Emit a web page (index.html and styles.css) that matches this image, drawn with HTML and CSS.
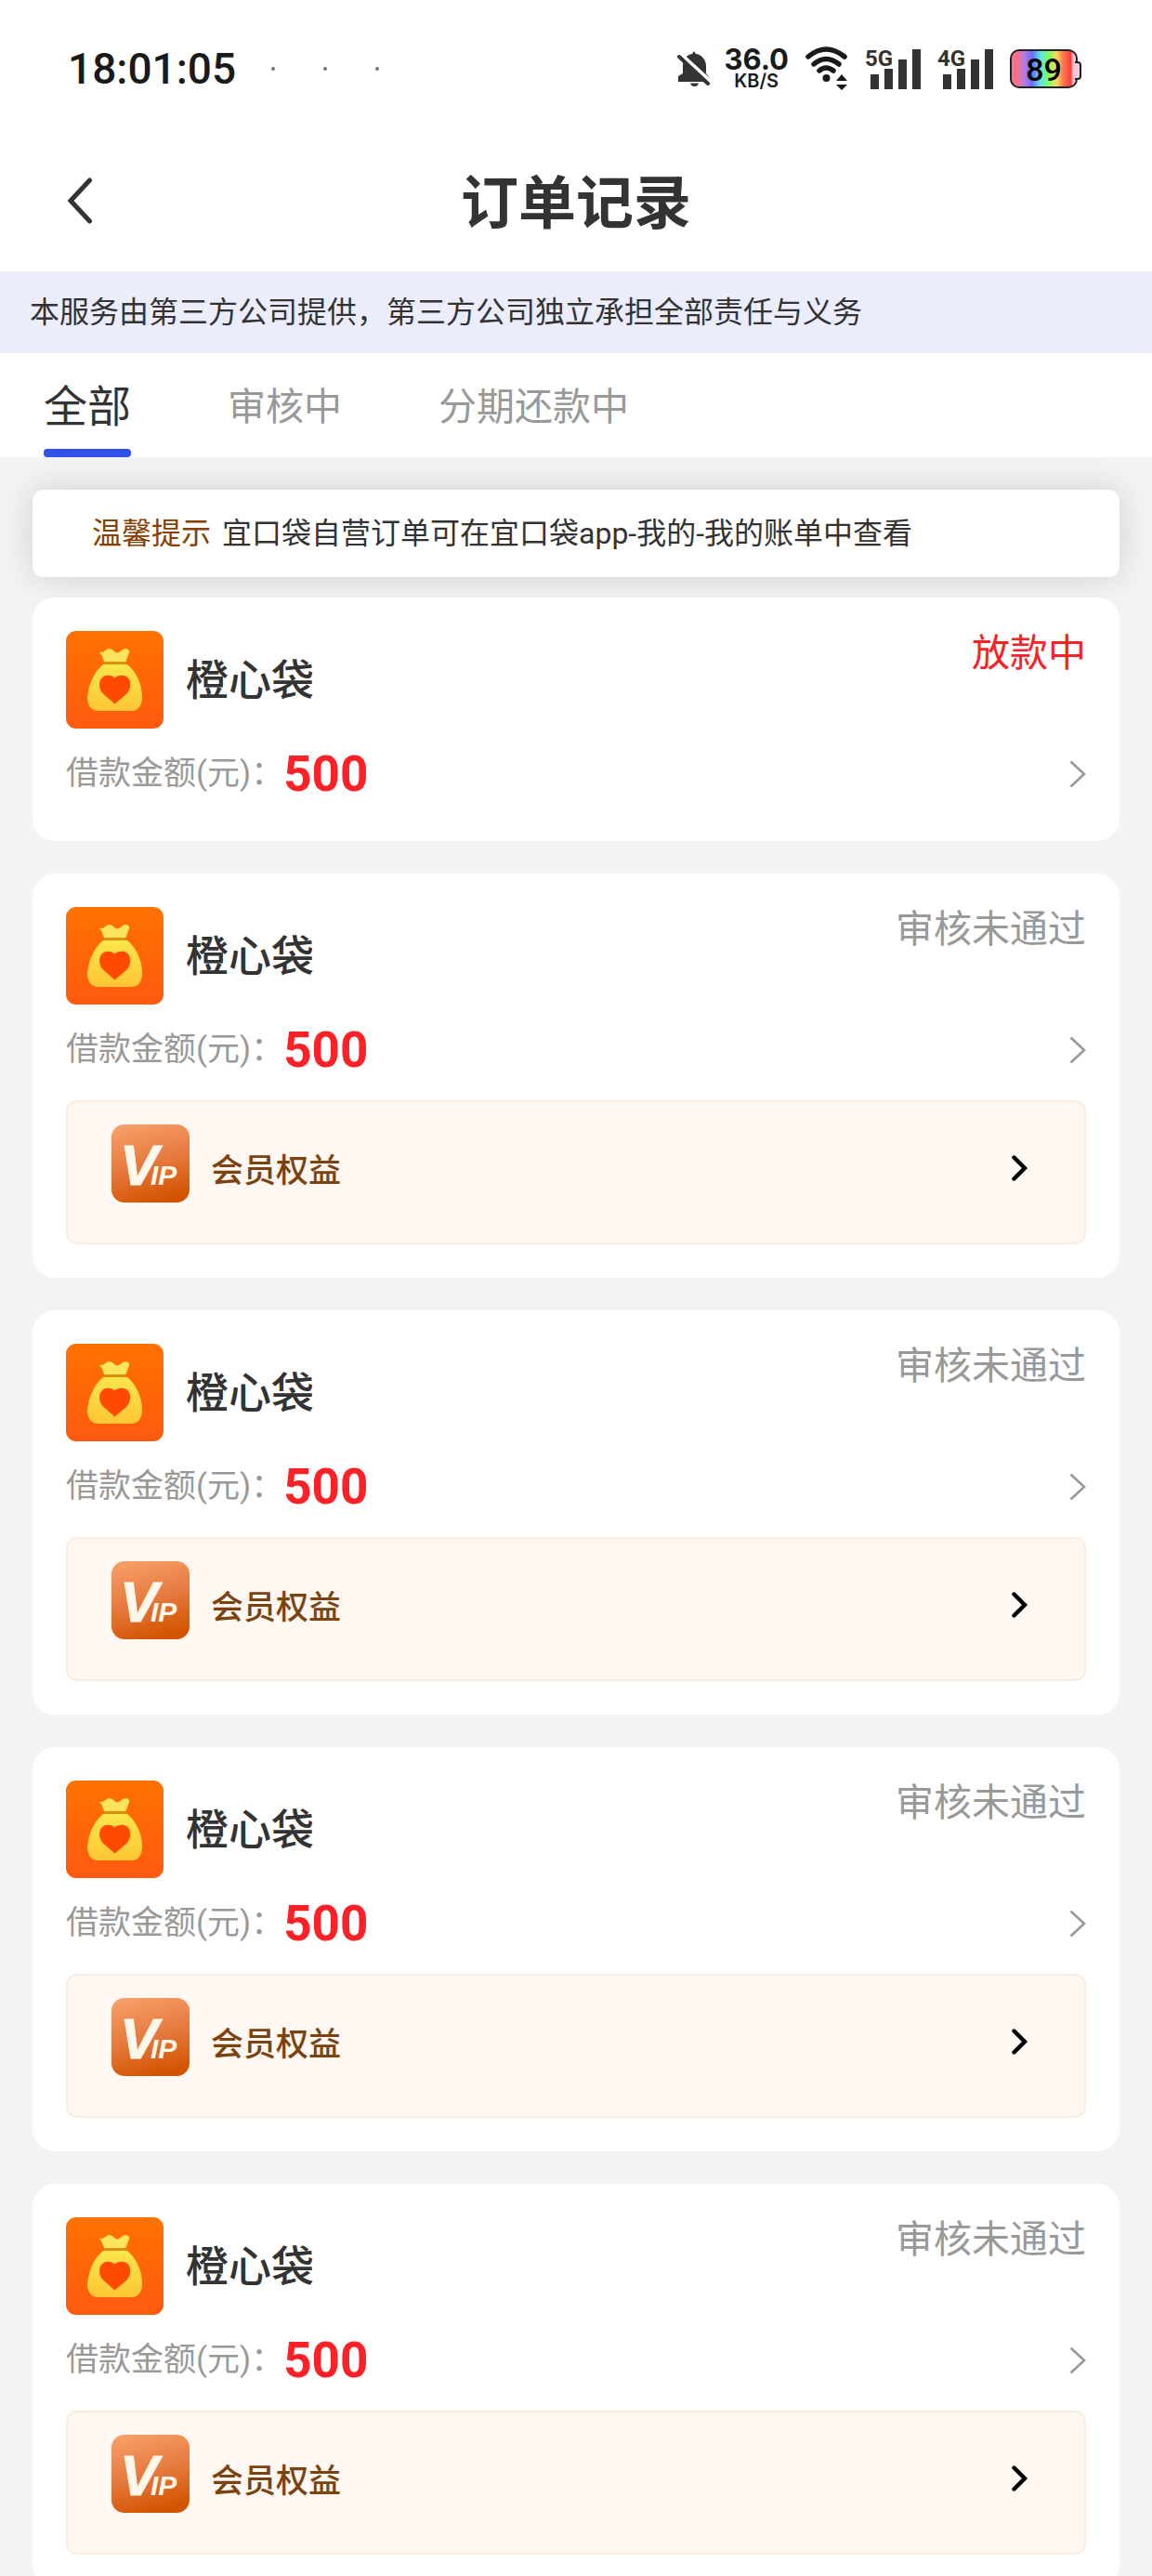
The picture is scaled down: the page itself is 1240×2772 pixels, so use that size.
FILE: index.html
```html
<!DOCTYPE html>
<html lang="zh-CN">
<head>
    <meta charset="UTF-8">
    <meta name="viewport" content="width=device-width, initial-scale=1">
    <title>订单记录</title>
    <link rel="stylesheet" href="styles.css">
</head>
<body>
    <!-- shared icons -->
    <svg class="sprite" aria-hidden="true">
        <defs>
            <linearGradient id="bagBg" x1="0" y1="0" x2="0" y2="1">
                <stop offset="0" stop-color="#ff7200"/>
                <stop offset="1" stop-color="#ff5a10"/>
            </linearGradient>
            <linearGradient id="bagGold" x1="0" y1="0" x2="0" y2="1">
                <stop offset="0" stop-color="#fbe64c"/>
                <stop offset="1" stop-color="#ffc634"/>
            </linearGradient>
        </defs>
        <symbol id="icon-bag" viewBox="0 0 105 105">
            <rect width="105" height="105" rx="11" fill="url(#bagBg)"/>
            <path d="M36 23 Q41 23 43 20.500 Q47 17.500 51 21 Q54 24.500 57 23 Q59 22 61 20 Q65 17.500 68 21 Q69 23 67 26 L64.500 33 H41 L39.500 29 Q38.500 25 36 23 Z" fill="#fde45c"/>
            <path d="M41 33 H64.500 V36 H41 Z" fill="#d9900a"/>
            <path d="M40 36 H66 C75 43 82 57 82 71 C82 80 78 86 70 86 H35 C27 86 23 80 23 72 C24 57 31 43 40 36 Z" fill="url(#bagGold)"/>
            <path d="M52.500 78.500 L40 67.500 C33 60 36 48 45 47.800 C49 47.800 51 49 52.500 50.500 C54 49 56 47.800 61 47.800 C70 48.500 72 60 65.500 67.500 Z" fill="#ff4a00"/>
        </symbol>
        <symbol id="icon-arrow" viewBox="0 0 18 30">
            <path d="M1.500 1.500 L16 15 L1.500 28.500" fill="none" stroke="#999" stroke-width="2.600"/>
        </symbol>
        <symbol id="icon-arrow-bold" viewBox="0 0 18 28">
            <path d="M2.500 2.500 L14 14 L2.500 25.500" fill="none" stroke="#000" stroke-width="4.400" stroke-linecap="round"/>
        </symbol>
    </svg>

    <div class="app">
        <div class="status-bar">
            <span class="time">18:01:05</span>
            <span class="dots"><i></i><i></i><i></i></span>
            <div class="status-icons">
                <svg width="36" height="40" viewBox="0 0 36 40">
                    <path d="M18 1 L20 4 C27 5 31 11 31 17 V25 L35 30 V34 H1 V28 L6 25 V17 C6 10 10 5 16 4 Z" fill="#333"/>
                    <path d="M14 35.500 H23 Q22 39 18.500 39 Q15 39 14 35.500 Z" fill="#333"/>
                    <path d="M4 4.500 L36 33.500" stroke="#fff" stroke-width="4"/>
                    <path d="M2 7 L33 36" stroke="#333" stroke-width="4" stroke-linecap="round"/>
                </svg>
                <div class="speed">
                    <span class="speed-value">36.0</span>
                    <span class="speed-unit">KB/S</span>
                </div>
                <svg class="wifi" width="46" height="48" viewBox="0 0 46 48">
                    <g fill="none" stroke="#1a1a1a" stroke-width="5.500" stroke-linecap="round">
                        <path d="M3 11 Q22 -5 42 11"/>
                        <path d="M9 19 Q22 8 36 19"/>
                        <path d="M15 26 Q22 20 30 26"/>
                    </g>
                    <circle cx="22.500" cy="34" r="4" fill="#1a1a1a"/>
                    <path d="M33 37 L39 30 L45 37 Z M33 41 H45 L39 47 Z" fill="#1a1a1a"/>
                </svg>
                <svg class="signal" width="60" height="44" viewBox="0 0 60 44">
                    <text x="0" y="19" class="net">5G</text>
                    <path d="M6 28 h9 v16 h-9z M21 22 h9 v22 h-9z M36 12 h9 v32 h-9z M51 1 h9 v43 h-9z" fill="#333"/>
                </svg>
                <svg class="signal" width="60" height="44" viewBox="0 0 60 44">
                    <text x="0" y="19" class="net">4G</text>
                    <path d="M6 28 h9 v16 h-9z M21 22 h9 v22 h-9z M36 12 h9 v32 h-9z M51 1 h9 v43 h-9z" fill="#333"/>
                </svg>
                <div class="battery"><span>89</span></div>
            </div>
        </div>

        <header class="nav">
            <button type="button" class="back" aria-label="返回">
                <svg width="28" height="50" viewBox="0 0 28 50">
                    <path d="M24.500 3 L4 25 L24.500 47" fill="none" stroke="#333" stroke-width="5" stroke-linecap="round"/>
                </svg>
            </button>
            <h1>订单记录</h1>
        </header>

        <div class="notice">本服务由第三方公司提供，第三方公司独立承担全部责任与义务</div>

        <nav class="tabs">
            <button type="button" class="tab active">全部</button>
            <button type="button" class="tab">审核中</button>
            <button type="button" class="tab">分期还款中</button>
        </nav>

        <main class="list">
            <div class="tip">
                <span class="tip-label">温馨提示</span>
                <span>宜口袋自营订单可在宜口袋app-我的-我的账单中查看</span>
            </div>

            <article class="card">
                <div class="card-head">
                    <svg class="logo"><use href="#icon-bag"/></svg>
                    <h2>橙心袋</h2>
                    <span class="state lending">放款中</span>
                </div>
                <a href="#" class="amount">
                    <span class="amount-label">借款金额(元)：</span>
                    <strong>500</strong>
                    <svg class="arrow"><use href="#icon-arrow"/></svg>
                </a>
            </article>

            <article class="card">
                <div class="card-head">
                    <svg class="logo"><use href="#icon-bag"/></svg>
                    <h2>橙心袋</h2>
                    <span class="state">审核未通过</span>
                </div>
                <a href="#" class="amount">
                    <span class="amount-label">借款金额(元)：</span>
                    <strong>500</strong>
                    <svg class="arrow"><use href="#icon-arrow"/></svg>
                </a>
                <a href="#" class="vip">
                    <svg class="vip-icon" viewBox="0 0 84 84">
                        <text x="9" y="65" class="vip-big">V</text>
                        <text x="42" y="65" class="vip-small">IP</text>
                    </svg>
                    <span>会员权益</span>
                    <svg class="vip-arrow"><use href="#icon-arrow-bold"/></svg>
                </a>
            </article>

            <article class="card">
                <div class="card-head">
                    <svg class="logo"><use href="#icon-bag"/></svg>
                    <h2>橙心袋</h2>
                    <span class="state">审核未通过</span>
                </div>
                <a href="#" class="amount">
                    <span class="amount-label">借款金额(元)：</span>
                    <strong>500</strong>
                    <svg class="arrow"><use href="#icon-arrow"/></svg>
                </a>
                <a href="#" class="vip">
                    <svg class="vip-icon" viewBox="0 0 84 84">
                        <text x="9" y="65" class="vip-big">V</text>
                        <text x="42" y="65" class="vip-small">IP</text>
                    </svg>
                    <span>会员权益</span>
                    <svg class="vip-arrow"><use href="#icon-arrow-bold"/></svg>
                </a>
            </article>

            <article class="card">
                <div class="card-head">
                    <svg class="logo"><use href="#icon-bag"/></svg>
                    <h2>橙心袋</h2>
                    <span class="state">审核未通过</span>
                </div>
                <a href="#" class="amount">
                    <span class="amount-label">借款金额(元)：</span>
                    <strong>500</strong>
                    <svg class="arrow"><use href="#icon-arrow"/></svg>
                </a>
                <a href="#" class="vip">
                    <svg class="vip-icon" viewBox="0 0 84 84">
                        <text x="9" y="65" class="vip-big">V</text>
                        <text x="42" y="65" class="vip-small">IP</text>
                    </svg>
                    <span>会员权益</span>
                    <svg class="vip-arrow"><use href="#icon-arrow-bold"/></svg>
                </a>
            </article>

            <article class="card">
                <div class="card-head">
                    <svg class="logo"><use href="#icon-bag"/></svg>
                    <h2>橙心袋</h2>
                    <span class="state">审核未通过</span>
                </div>
                <a href="#" class="amount">
                    <span class="amount-label">借款金额(元)：</span>
                    <strong>500</strong>
                    <svg class="arrow"><use href="#icon-arrow"/></svg>
                </a>
                <a href="#" class="vip">
                    <svg class="vip-icon" viewBox="0 0 84 84">
                        <text x="9" y="65" class="vip-big">V</text>
                        <text x="42" y="65" class="vip-small">IP</text>
                    </svg>
                    <span>会员权益</span>
                    <svg class="vip-arrow"><use href="#icon-arrow-bold"/></svg>
                </a>
            </article>
        </main>
    </div>
</body>
</html>
```
FILE: styles.css
```css
:root {
    --text-color: #333;
    --muted-color: #999;
    --background-color: #f3f3f3;
    --primary-color: #3350e8;
    --danger-color: #fb2126;
    --vip-color: #7a4310;
}

* {
    box-sizing: border-box;
}

body {
    margin: 0;
    font-family: Roboto, "Noto Sans CJK SC", sans-serif;
    color: var(--text-color);
    background: var(--background-color);
}

button {
    padding: 0;
    border: none;
    background: none;
    font-family: inherit;
    color: inherit;
    cursor: pointer;
}

a {
    color: inherit;
    text-decoration: none;
}

svg {
    display: block;
    flex-shrink: 0;
}

.sprite {
    position: absolute;
    width: 0;
    height: 0;
}

.app {
    display: flex;
    flex-direction: column;
    height: 100vh;
}

/* status bar */
.status-bar {
    display: flex;
    align-items: center;
    height: 148px;
    padding: 0 76px 0 73px;
    background: #fff;
    color: #1a1a1a;
}

.time {
    font-size: 46px;
    font-weight: 500;
    line-height: 54px;
}

.dots {
    display: flex;
    gap: 52px;
    margin-left: 38px;
}

.dots i {
    width: 4px;
    height: 4px;
    border-radius: 2px;
    background: #777;
}

.status-icons {
    display: flex;
    align-items: center;
    gap: 14px;
    margin-left: auto;
}

.speed {
    display: flex;
    flex-direction: column;
    align-items: center;
    font-family: Inter, sans-serif;
}

.speed-value {
    font-size: 31px;
    font-weight: 700;
    line-height: 26px;
}

.speed-unit {
    font-size: 20px;
    font-weight: 600;
    line-height: 20px;
}

.wifi,
.signal,
.battery {
    margin-left: 4px;
}

.signal {
    overflow: visible;
}

.net {
    font-size: 24px;
    font-weight: 700;
    fill: #333;
}

.battery {
    position: relative;
    width: 73px;
    height: 42px;
    margin-right: 4px;
    border: 2px solid #222;
    border-radius: 10px;
    background: linear-gradient(90deg, #ff6f8c 8%, #b07be0 20%, #6a6cff 32%, #62e6e0 45%, #7dff5c 58%, #ffd75c 70%, #ff7a50 80%, #ff3b3b 92%, #fbc8d8 96%);
    font-size: 34px;
    font-weight: 500;
    line-height: 40px;
    color: #000;
    text-align: center;
}

.battery::after {
    content: "";
    position: absolute;
    top: 11px;
    right: -6px;
    width: 5px;
    height: 16px;
    border: 2px solid #222;
    border-left: none;
    border-radius: 0 4px 4px 0;
    background: #fbc8d8;
}

/* title */
.nav {
    display: grid;
    grid-template-columns: 100px 1fr 100px;
    align-items: center;
    height: 144px;
    padding: 0 72px;
    background: #fff;
}

.back {
    padding-bottom: 8px;
}

.nav h1 {
    margin: 0;
    font-size: 62px;
    font-weight: 700;
    line-height: 80px;
    text-align: center;
}

.notice {
    padding: 20px 32px;
    background: #ebedfd;
    font-size: 32px;
    line-height: 48px;
}

.tabs {
    display: flex;
    gap: 104px;
    height: 112px;
    padding: 0 47px;
    background: #fff;
}

.tab {
    padding: 16px 0 13px;
    font-size: 41px;
    line-height: 60px;
    color: var(--muted-color);
}

.tab.active {
    position: relative;
    font-size: 47px;
    color: var(--text-color);
}

.tab.active::after {
    content: "";
    position: absolute;
    left: 0;
    right: 0;
    bottom: 0;
    height: 9px;
    border-radius: 4px;
    background: var(--primary-color);
}

/* orders */
.list {
    flex: 1;
    min-height: 0;
    padding: 35px;
    overflow-y: auto;
    scrollbar-width: none;
}

.tip {
    display: flex;
    gap: 12px;
    padding: 23px 64px;
    margin-bottom: 22px;
    border-radius: 12px;
    background: #fff;
    box-shadow: 0 0 36px rgba(0, 0, 0, 0.15);
    font-size: 32px;
    line-height: 48px;
}

.tip-label {
    color: #874000;
}

.card {
    position: relative;
    padding: 36px;
    margin-bottom: 35px;
    border-radius: 24px;
    background: #fff;
}

.card-head {
    display: flex;
    align-items: center;
}

.logo {
    width: 105px;
    height: 105px;
}

.card h2 {
    margin: 0 0 0 24px;
    font-size: 46px;
    font-weight: 500;
    line-height: 64px;
}

.state {
    align-self: flex-start;
    margin-left: auto;
    font-size: 41px;
    line-height: 48px;
    color: var(--muted-color);
}

.state.lending {
    color: var(--danger-color);
}

.amount {
    display: flex;
    align-items: center;
    height: 72px;
    margin-top: 13px;
}

.amount-label {
    font-size: 35px;
    line-height: 48px;
    color: var(--muted-color);
}

.amount strong {
    font-size: 53px;
    line-height: 72px;
    color: var(--danger-color);
}

.arrow {
    width: 18px;
    height: 30px;
    margin-left: auto;
}

.vip {
    display: flex;
    align-items: flex-start;
    padding: 24px 60px 25px 47px;
    margin-top: 18px;
    border: 2px solid #fbece0;
    border-radius: 12px;
    background: #fff7f1;
    font-size: 35px;
    font-weight: 500;
    color: var(--vip-color);
}

.vip span {
    margin-left: 23px;
    line-height: 102px;
}

.vip-icon {
    width: 84px;
    height: 84px;
    border-radius: 14px;
    background: linear-gradient(165deg, #f8a26c, #e5793d 50%, #d35400 90%);
    font-family: "Liberation Sans", sans-serif;
    font-style: italic;
    font-weight: 700;
    fill: #fff7ea;
}

.vip-big {
    font-size: 62px;
    stroke: #fff7ea;
    stroke-width: 1px;
}

.vip-small {
    font-size: 30px;
}

.vip-arrow {
    width: 18px;
    height: 28px;
    margin: 33px 0 0 auto;
}
```
